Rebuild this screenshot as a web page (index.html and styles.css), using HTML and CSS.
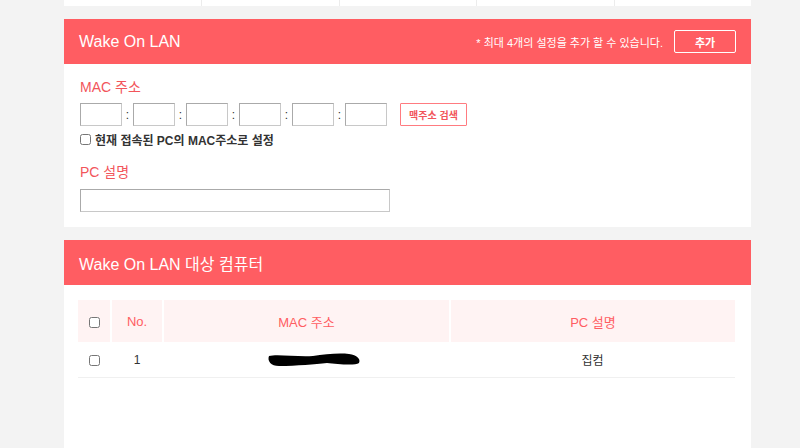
FILE: index.html
```html
<!DOCTYPE html>
<html lang="ko">
<head>
  <meta charset="UTF-8">
  <meta name="viewport" content="width=device-width, initial-scale=1.0">
  <title>Wake On LAN</title>
  <link rel="stylesheet" href="styles.css">
</head>
<body>
  <div class="page">
    <div class="tabs">
      <div></div><div></div><div></div><div></div><div></div>
    </div>

    <section class="panel">
      <div class="panel-head">
        <h2>Wake On LAN</h2>
        <div class="head-right">
          <span class="note">* 최대 4개의 설정을 추가 할 수 있습니다.</span>
          <button type="button" class="btn-add">추가</button>
        </div>
      </div>
      <div class="panel-body">
        <label class="field-label">MAC 주소</label>
        <div class="mac-row">
          <input type="text" class="mac-box">
          <span class="colon">:</span>
          <input type="text" class="mac-box">
          <span class="colon">:</span>
          <input type="text" class="mac-box">
          <span class="colon">:</span>
          <input type="text" class="mac-box">
          <span class="colon">:</span>
          <input type="text" class="mac-box">
          <span class="colon">:</span>
          <input type="text" class="mac-box">
          <button type="button" class="btn-search">맥주소 검색</button>
        </div>
        <label class="check-row"><input type="checkbox"> 현재 접속된 PC의 MAC주소로 설정</label>

        <label class="field-label label-pc">PC 설명</label>
        <input type="text" class="pc-input">
      </div>
    </section>

    <section class="panel panel-list">
      <div class="panel-head">
        <h2>Wake On LAN 대상 컴퓨터</h2>
      </div>
      <div class="list-body">
        <table class="pc-table">
          <thead>
            <tr>
              <th class="col-check"><input type="checkbox"></th>
              <th class="col-no">No.</th>
              <th class="col-mac">MAC 주소</th>
              <th>PC 설명</th>
            </tr>
          </thead>
          <tbody>
            <tr>
              <td class="col-check"><input type="checkbox"></td>
              <td>1</td>
              <td>
                <svg class="redact" width="94" height="14" viewBox="0 0 94 14">
                  <path d="M2 3 C10 1 30 4 46 3 C58 1 72 0 82 1 C90 2 94 6 92 10 C88 13 70 11 60 10 C48 11 30 13 12 13 C4 13 0 8 2 3 Z" fill="#000"/>
                </svg>
              </td>
              <td>집컴</td>
            </tr>
          </tbody>
        </table>
      </div>
    </section>
  </div>
</body>
</html>
```

FILE: styles.css
```css
body {
  margin: 0;
  background-color: #f3f3f3;
  font-family: "Liberation Sans", "Noto Sans CJK KR", sans-serif;
  color: #333;
}

.page {
  width: 687px;
  margin-left: 64px;
}

.tabs {
  display: grid;
  grid-template-columns: repeat(5, 1fr);
  height: 6px;
  background: white;
}

.tabs div {
  border-left: 1px solid #ececec;
}

.tabs div:first-child {
  border-left: none;
}

.panel {
  margin-top: 13px;
  background: white;
}

.panel-head {
  height: 45px;
  padding: 0 15px;
  background-color: #ff5d62;
  display: flex;
  align-items: center;
  justify-content: space-between;
  color: white;
}

.panel-head h2 {
  margin: 0;
  font-size: 16px;
  font-weight: normal;
}

.head-right {
  display: flex;
  align-items: center;
  gap: 11px;
}

.note {
  font-size: 11px;
}

.btn-add {
  width: 62px;
  height: 23px;
  background: transparent;
  border: 1px solid white;
  border-radius: 2px;
  color: white;
  font-family: inherit;
  font-size: 11px;
  font-weight: bold;
  cursor: pointer;
}

.panel-body {
  padding: 14px 16px 15px;
}

.field-label {
  display: block;
  font-size: 14px;
  line-height: 18px;
  color: #f2555b;
}

.mac-row {
  display: flex;
  align-items: center;
  margin-top: 7px;
  height: 23px;
}

.mac-box {
  box-sizing: border-box;
  width: 42px;
  height: 23px;
  margin: 0;
  border: 1px solid #aaa;
  border-bottom-color: #c8c8c8;
  border-right-color: #c8c8c8;
}

.colon {
  width: 11px;
  text-align: center;
  font-size: 12px;
}

.btn-search {
  box-sizing: border-box;
  margin-left: 13px;
  width: 67px;
  height: 23px;
  background: white;
  border: 1px solid #ff7b80;
  border-radius: 1px;
  color: #f2555b;
  font-family: inherit;
  font-size: 10px;
  font-weight: bold;
  padding: 0;
  cursor: pointer;
}

.check-row {
  display: flex;
  align-items: center;
  gap: 4px;
  margin-top: 5px;
  height: 16px;
  font-size: 12px;
  font-weight: bold;
  color: #333;
}

.check-row input {
  margin: 0;
  width: 11px;
  height: 11px;
}

.label-pc {
  margin-top: 16px;
}

.pc-input {
  display: block;
  box-sizing: border-box;
  margin-top: 8px;
  width: 310px;
  height: 23px;
  border: 1px solid #aaa;
  border-bottom-color: #c8c8c8;
  border-right-color: #c8c8c8;
}

.panel-list {
  min-height: 300px;
}

.list-body {
  padding: 15px 15px 0 15px;
}

.pc-table {
  width: 657px;
  margin-left: -1px;
  table-layout: fixed;
  border-collapse: collapse;
  font-size: 12px;
}

.pc-table th {
  height: 42px;
  padding: 0;
  background-color: #fff3f3;
  border-right: 2px solid white;
  color: #ff5d62;
  font-size: 13px;
  font-weight: normal;
}

.pc-table th:last-child {
  border-right: none;
}

.pc-table td {
  height: 35px;
  padding: 0;
  text-align: center;
  border-bottom: 1px solid #f0f0f0;
}

.pc-table input {
  margin: 0;
  width: 11px;
  height: 11px;
  vertical-align: middle;
}

.col-check {
  width: 32px;
}

.col-no {
  width: 50px;
}

.col-mac {
  width: 285px;
}

.redact {
  display: block;
  margin: 0 auto 0 104px;
}
```
